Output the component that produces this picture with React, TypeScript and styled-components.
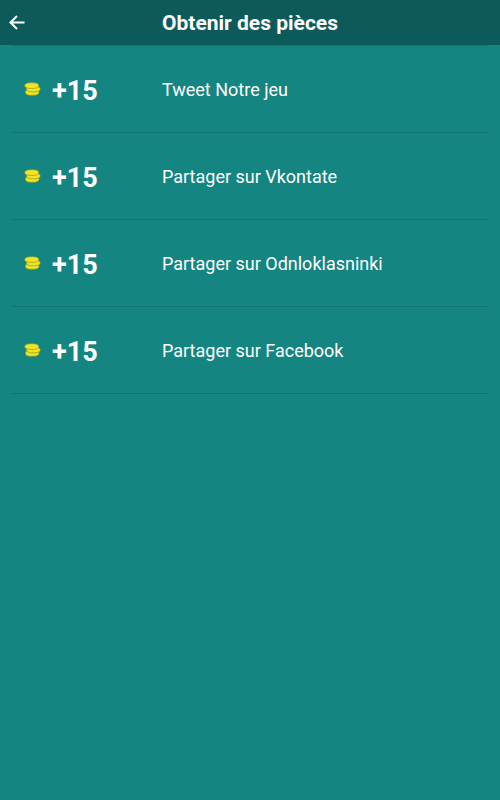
import React from "react";
import styled, { createGlobalStyle } from "styled-components";

const GlobalStyle = createGlobalStyle`
  *, *::before, *::after { box-sizing: border-box; }
  body {
    margin: 0;
    background: #148581;
    color: #fff;
    font-family: Roboto, "Liberation Sans", sans-serif;
  }
`;

const Page = styled.div`
  min-height: 100vh;
`;

const TopBar = styled.header`
  display: grid;
  grid-template-columns: 1fr auto 1fr;
  align-items: center;
  height: 45px;
  padding-top: 1px;
  background: #0d5a5b;
`;

const BackButton = styled.button`
  display: flex;
  justify-self: start;
  padding: 8px;
  border: 0;
  background: none;
  color: inherit;
  cursor: pointer;
`;

const Title = styled.h1`
  margin: 0;
  font-size: 21px;
  line-height: 28px;
  font-weight: 700;
`;

const Rewards = styled.ul`
  margin: 0 12px;
  padding: 0;
  border-top: 1px solid #117370;
  list-style: none;
`;

const RewardItem = styled.li`
  border-bottom: 1px solid #117572;
`;

const RewardButton = styled.button`
  display: grid;
  grid-template-columns: 28px 110px 1fr;
  align-items: center;
  width: 100%;
  height: 86px;
  padding: 0 12px;
  border: 0;
  background: none;
  color: inherit;
  font: inherit;
  text-align: left;
  cursor: pointer;
`;

const Amount = styled.span`
  padding-top: 3px;
  font-size: 27px;
  line-height: 32px;
  font-weight: 700;
`;

const Label = styled.span`
  padding-top: 2px;
  font-size: 18px;
  line-height: 24px;
`;

const BackArrow = () => (
  <svg width="18" height="18" viewBox="0 0 18 18" fill="none" stroke="currentColor" strokeWidth="2" aria-hidden="true">
    <path d="M16.500 8.500H2.500M9 2L2.500 8.500L9 15" />
  </svg>
);

const Coins = () => (
  <svg width="17" height="14" viewBox="0 0 17 14" aria-hidden="true">
    <g fill="#f5e221" stroke="#7f9d38" strokeWidth="0.7">
      <path d="M1.500 9.500C1.500 8 4 7.500 8 7.500S15 8 15 9.500V10.500C15 12.500 12 13.300 8 13.300S1.500 12.500 1.500 10.500Z" />
      <path d="M2.500 6.500C2.500 5 5 4.300 9.500 4.300S16.200 5 16.200 6.500V7.300C16.200 9 13 9.900 9.500 9.900S2.500 9 2.500 7.300Z" />
      <path d="M.8 3.200C.8 1.500 4 .7 7.800 .7S14.700 1.500 14.700 3.200V4C14.700 5.700 11.500 6.500 7.800 6.500S.8 5.700 .8 4Z" />
    </g>
  </svg>
);

const rewards = [
  { amount: "+15", label: "Tweet Notre jeu" },
  { amount: "+15", label: "Partager sur Vkontate" },
  { amount: "+15", label: "Partager sur Odnloklasninki" },
  { amount: "+15", label: "Partager sur Facebook" },
];

export default function App() {
  return (
    <Page>
      <GlobalStyle />
      <TopBar>
        <BackButton type="button" aria-label="Retour">
          <BackArrow />
        </BackButton>
        <Title>Obtenir des pièces</Title>
      </TopBar>
      <main>
        <Rewards>
          {rewards.map(({ amount, label }) => (
            <RewardItem key={label}>
              <RewardButton type="button">
                <Coins />
                <Amount>{amount}</Amount>
                <Label>{label}</Label>
              </RewardButton>
            </RewardItem>
          ))}
        </Rewards>
      </main>
    </Page>
  );
}
